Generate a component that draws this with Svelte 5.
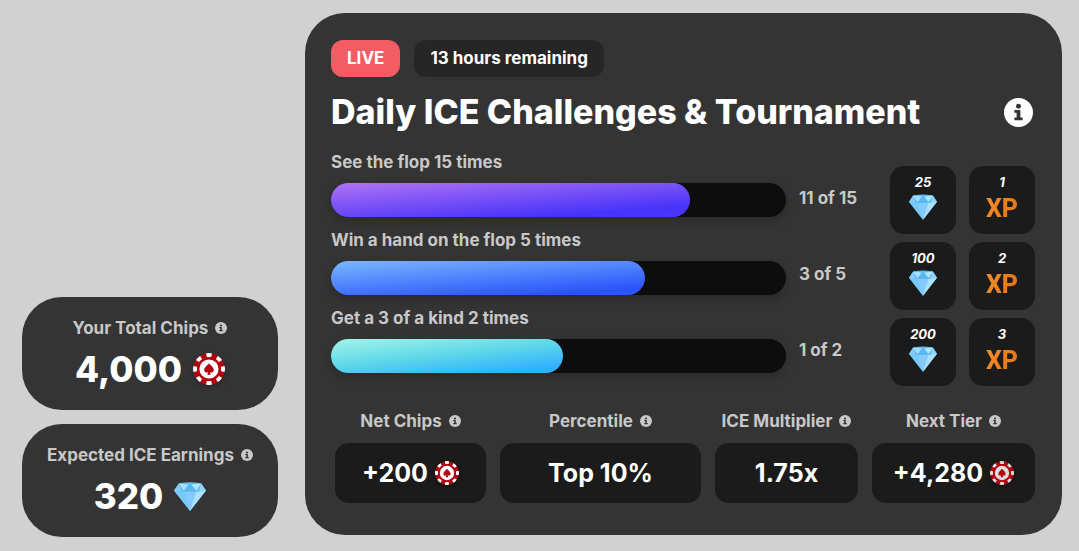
<script>
  const totals = [
    { label: 'Your Total Chips', value: '4,000', icon: 'chip' },
    { label: 'Expected ICE Earnings', value: '320', icon: 'gem' }
  ];
  const challenges = [
    { name: 'See the flop 15 times', progress: '11 of 15', fill: 79, tone: 'violet', ice: 25, xp: 1 },
    { name: 'Win a hand on the flop 5 times', progress: '3 of 5', fill: 69, tone: 'blue', ice: 100, xp: 2 },
    { name: 'Get a 3 of a kind 2 times', progress: '1 of 2', fill: 51, tone: 'aqua', ice: 200, xp: 3 }
  ];
  const stats = [
    { label: 'Net Chips', value: '+200', chip: true },
    { label: 'Percentile', value: 'Top 10%' },
    { label: 'ICE Multiplier', value: '1.75x' },
    { label: 'Next Tier', value: '+4,280', chip: true, dim: true }
  ];
  const edges = [0, 45, 90, 135, 180, 225, 270, 315];
</script>

{#snippet info(topic)}
  <button class="info" type="button" aria-label={topic}>
    <svg viewBox="0 0 28 28" aria-hidden="true">
      <circle cx="14" cy="14" r="14" fill="currentColor" />
      <circle class="mark" cx="14" cy="8" r="2.4" />
      <path class="mark" d="M10 11.6h5.8v7.2H18v2.6h-8v-2.6h2.2v-4.6H10z" />
    </svg>
  </button>
{/snippet}

{#snippet chip(dim)}
  <svg class="chip" class:dim viewBox="0 0 32 32" aria-hidden="true">
    <circle cx="16" cy="16" r="16" fill="#b1060f" />
    {#each edges as turn}
      <path class="light" d="M13 .3a16 16 0 0 1 6 0l-.8 3.7h-4.4z" transform="rotate({turn} 16 16)" />
    {/each}
    <circle class="light" cx="16" cy="16" r="9.6" />
    <path fill="#b1060f" d="M16 10.2c1.2 2 4.8 3.8 4.8 6.9 0 2.5-2.7 3.3-4 1.7l.9 3h-3.4l.9-3c-1.3 1.6-4 .8-4-1.7 0-3.1 3.6-4.9 4.8-6.9z" />
  </svg>
{/snippet}

{#snippet gem()}
  <svg class="gem" viewBox="0 0 32 29" aria-hidden="true">
    <path fill="#5fbcf3" d="M5 1.2Q16-.9 27 1.2L32 8.4 16 29 0 8.4z" />
    <path fill="#86cef8" d="M5 1.2 0 8.4l7 .9z" />
    <path fill="#a9e0fc" d="M5 1.6 14.6 2.4 9.6 8.8z" />
    <path fill="#b4e6fe" d="M27 1.6 17.4 2.4 22.4 8.8z" />
    <path fill="#93d4fa" d="M27 1.2 32 8.4l-7 .9z" />
    <path fill="#58b9f1" d="M16 2.4 22.2 9.8H9.8z" />
    <path fill="#79c8fa" d="M0 8.4 10 10 16 29z" />
    <path fill="#86cbff" d="M10 9.8h12L16 29z" />
    <path fill="#ace2ff" d="M32 8.4 22 10 16 29z" />
  </svg>
{/snippet}

<div class="page">
  <aside>
    {#each totals as total}
      <section class="total">
        <h2 class="label">{total.label}{@render info(total.label)}</h2>
        <p class="amount">{total.value}{#if total.icon === 'chip'}{@render chip(false)}{:else}{@render gem()}{/if}</p>
      </section>
    {/each}
  </aside>

  <main>
    <div class="badges">
      <span class="badge live">LIVE</span>
      <span class="badge">13 hours remaining</span>
    </div>
    <header>
      <h1>Daily ICE Challenges &amp; Tournament</h1>
      {@render info('About the tournament')}
    </header>

    <div class="challenges">
      <div class="bars">
        {#each challenges as item}
          <div class="challenge">
            <h2 class="label">{item.name}</h2>
            <div class="track">
              <div class="fill {item.tone}" style="width: {item.fill}%"></div>
            </div>
          </div>
        {/each}
      </div>
      <div class="results">
        {#each challenges as item}
          <div class="result">
            <span class="label">{item.progress}</span>
            <div class="reward"><em>{item.ice}</em>{@render gem()}</div>
            <div class="reward"><em>{item.xp}</em><b class="xp">XP</b></div>
          </div>
        {/each}
      </div>
    </div>

    <div class="stats">
      {#each stats as stat}
        <section class="stat">
          <h2 class="label">{stat.label}{@render info(stat.label)}</h2>
          <p class="value">{stat.value}{#if stat.chip}{@render chip(stat.dim)}{/if}</p>
        </section>
      {/each}
    </div>
  </main>
</div>

<style>
  :global(body) {
    margin: 0;
    background: #d1d1d1;
  }
  .page {
    box-sizing: border-box;
    min-height: 100vh;
    display: grid;
    grid-template-columns: 256px 1fr;
    gap: 27px;
    padding: 13px 17px 14px 22px;
    font-family: Inter, sans-serif;
    color: #fff;
  }
  h1, h2, p {
    margin: 0;
  }
  aside {
    display: flex;
    flex-direction: column;
    justify-content: flex-end;
    gap: 14px;
  }
  .label {
    display: flex;
    align-items: center;
    justify-content: center;
    gap: 7px;
    font-size: 17px;
    line-height: 24px;
    font-weight: 700;
    color: #c8c8c8;
    white-space: nowrap;
  }
  .info {
    display: block;
    flex: none;
    width: 12px;
    height: 12px;
    padding: 0;
    border: 0;
    border-radius: 50%;
    background: none;
    color: inherit;
    cursor: pointer;
  }
  svg {
    display: block;
    flex: none;
  }
  .info svg {
    width: 100%;
    height: 100%;
  }
  .mark {
    fill: #343434;
  }
  .total {
    padding: 19px 0;
    border-radius: 40px;
    background: #343434;
  }
  .amount {
    display: flex;
    align-items: center;
    justify-content: center;
    gap: 11px;
    margin-top: 7px;
    font-size: 35px;
    line-height: 44px;
    font-weight: 800;
  }
  .chip {
    width: 32px;
    height: 32px;
    border-radius: 50%;
    box-shadow: 0 2px 4px #00000040;
  }
  .light {
    fill: #fff;
  }
  .dim .light {
    fill: #dcdcdc;
  }
  .gem {
    width: 32px;
    height: 29px;
  }
  main {
    margin-bottom: 2px;
    padding: 27px 27px 32px 26px;
    border-radius: 40px;
    background: #343434;
  }
  .badges {
    display: flex;
    gap: 14px;
  }
  .badge {
    padding: 0 16px;
    border-radius: 12px;
    background: #262626;
    font-size: 17px;
    line-height: 37px;
    font-weight: 700;
  }
  .live {
    background: #f25c62;
  }
  header {
    display: flex;
    align-items: center;
    justify-content: space-between;
    margin-top: 13px;
    padding-right: 2px;
  }
  h1 {
    font-size: 34px;
    line-height: 44px;
    font-weight: 800;
  }
  header .info {
    width: 29px;
    height: 29px;
  }
  .challenges {
    display: grid;
    grid-template-columns: 1fr 236px;
    gap: 13px;
    margin-top: 16px;
  }
  .bars {
    display: flex;
    flex-direction: column;
    gap: 11px;
  }
  .challenge .label {
    display: block;
  }
  .track {
    height: 34px;
    margin-top: 9px;
    border-radius: 17px;
    background: #0d0d0d;
    box-shadow: 0 4px 10px #00000033;
  }
  .fill {
    height: 100%;
    border-radius: 17px;
  }
  .violet {
    background: linear-gradient(176deg, #b073f4, #4733fa 82%, #4a38ff);
  }
  .blue {
    background: linear-gradient(176deg, #79b8ff, #2a52fb 88%, #2f58ff);
  }
  .aqua {
    background: linear-gradient(174deg, #a4f4ea, #60d8e8 46%, #31b0ff 88%);
  }
  .results {
    display: flex;
    flex-direction: column;
    gap: 8px;
    margin-top: 16px;
  }
  .result {
    display: grid;
    grid-template-columns: 1fr 66px 66px;
    gap: 13px;
    align-items: center;
  }
  .result .label {
    justify-content: flex-start;
    padding-bottom: 5px;
  }
  .reward {
    display: flex;
    flex-direction: column;
    align-items: center;
    box-sizing: border-box;
    height: 68px;
    padding-top: 8px;
    border-radius: 14px;
    background: #1b1b1b;
  }
  .reward em {
    font-size: 13px;
    line-height: 16px;
    font-weight: 700;
  }
  .reward .gem {
    width: 28px;
    height: 26px;
    margin-top: 4px;
  }
  .xp {
    margin-top: 4px;
    background: linear-gradient(110deg, #f48f28, #ea7a1a 70%, #d96a10);
    background-clip: text;
    color: transparent;
    font-family: Roboto, sans-serif;
    font-size: 25px;
    line-height: 30px;
    font-weight: 800;
  }
  .stats {
    display: grid;
    grid-template-columns: 151fr 201fr 143fr 163fr;
    gap: 14px;
    margin: 23px 0 0 4px;
  }
  .value {
    display: flex;
    align-items: center;
    justify-content: center;
    gap: 7px;
    margin-top: 10px;
    border-radius: 14px;
    background: #1b1b1b;
    font-size: 25px;
    line-height: 60px;
    font-weight: 700;
  }
  .value .chip {
    width: 24px;
    height: 24px;
  }
</style>
